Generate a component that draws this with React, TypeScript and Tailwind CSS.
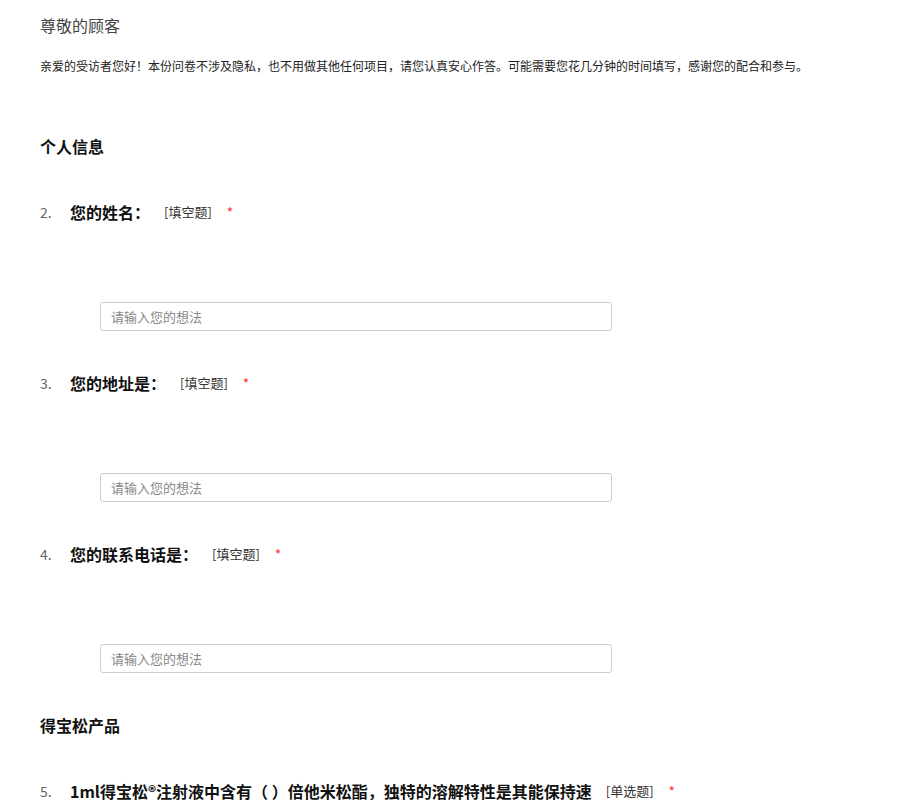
import React from "react"

const FONT = { fontFamily: '"Noto Sans CJK SC", "Noto Sans", sans-serif' }

type Q = { no: number; title: string; kind: string; input?: boolean }

const Question = ({ q }: { q: Q }) => (
    <div>
        <div className="flex flex-row items-center h-6">
            <span className="w-[30px] text-[14px] text-[#666]">{q.no}.</span>
            <span className="text-[16px] font-bold text-[#111]">{q.title}</span>
            <span className="ml-[14px] text-[13px] text-[#333]">[{q.kind}]</span>
            <span className="ml-[15px] text-[14px] text-[#f33]">*</span>
        </div>
        {q.input && (
            <input
                className="block mt-[78px] ml-[60px] w-[512px] h-[29px] rounded-[3px] border border-[#ccc] px-[10px] text-[13px] text-[#333] placeholder:text-[#888] outline-none"
                placeholder="请输入您的想法"
                style={FONT}
            />
        )}
    </div>
)

const App = () => {
    const personal: Q[] = [
        { no: 2, title: "您的姓名：", kind: "填空题", input: true },
        { no: 3, title: "您的地址是：", kind: "填空题", input: true },
        { no: 4, title: "您的联系电话是：", kind: "填空题", input: true },
    ]

    return (
        <div className="min-h-[800px] bg-white px-10 overflow-hidden" style={FONT}>
            <div className="pt-[14px] text-[16px] leading-[22px] text-[#444]">尊敬的顾客</div>
            <div className="mt-[22px] text-[12px] leading-[16px] text-[#222] whitespace-nowrap">
                亲爱的受访者您好！本份问卷不涉及隐私，也不用做其他任何项目，请您认真安心作答。可能需要您花几分钟的时间填写，感谢您的配合和参与。
            </div>
            <div className="mt-[60px] text-[16px] leading-6 font-bold text-[#111]">个人信息</div>
            <div className="mt-[42px] flex flex-col gap-[40px]">
                {personal.map((q) => <Question key={q.no} q={q} />)}
            </div>
            <div className="mt-[40px] text-[16px] leading-6 font-bold text-[#111]">得宝松产品</div>
            <div className="mt-[42px]">
                <Question q={{ no: 5, title: "1ml得宝松®注射液中含有（ ）倍他米松酯，独特的溶解特性是其能保持速", kind: "单选题" }} />
            </div>
        </div>
    )
}

export default App
